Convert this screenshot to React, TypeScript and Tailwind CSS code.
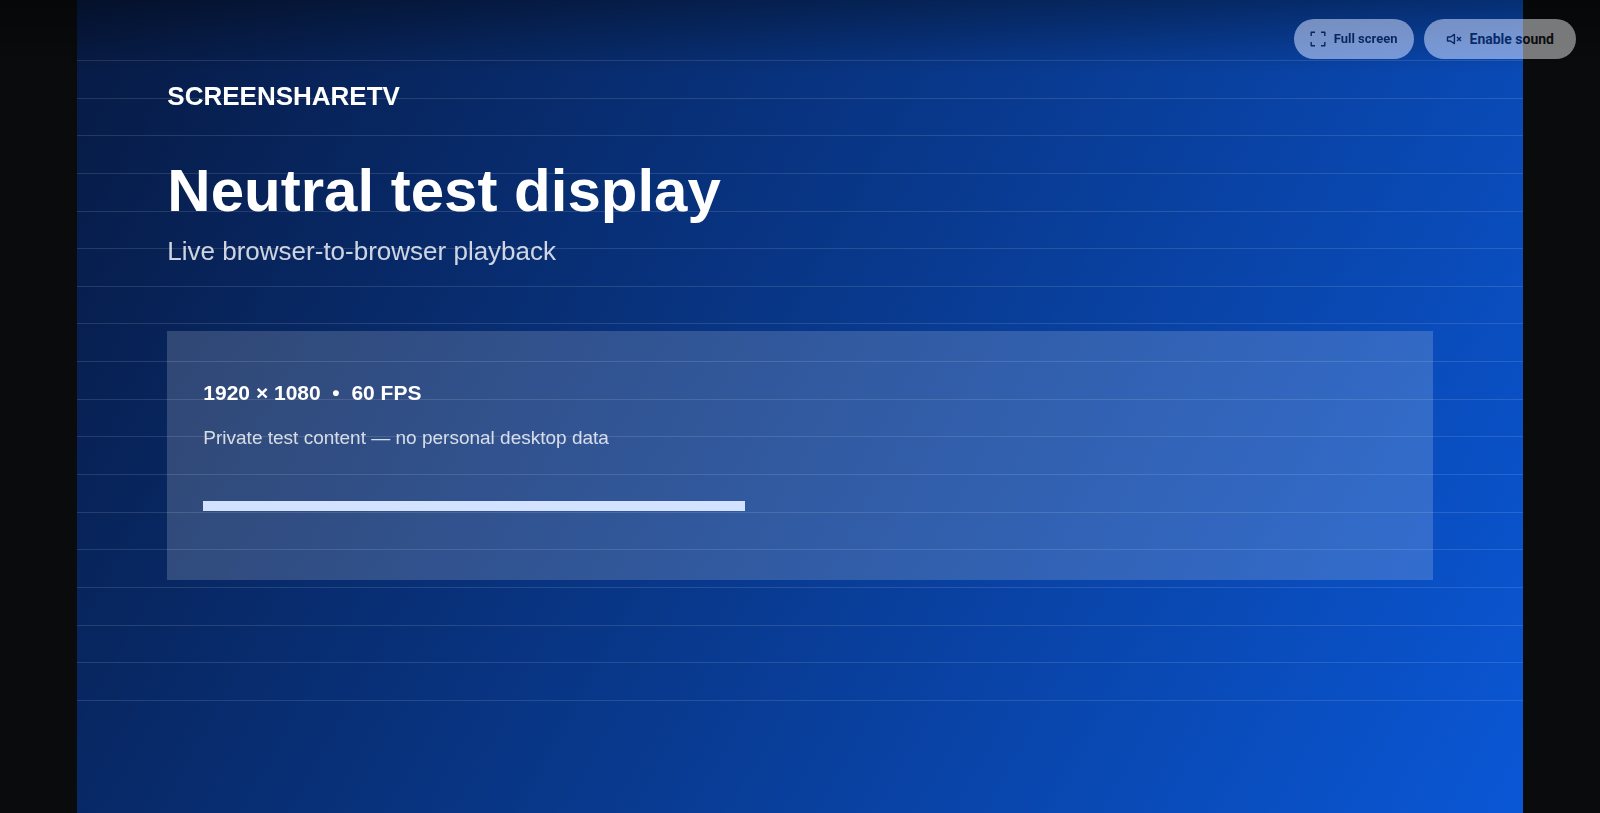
const GRID_ROWS = 17;

function FullScreenIcon() {
  return (
    <svg viewBox="0 0 16 16" className="size-4" fill="none" stroke="currentColor" strokeWidth="1.4" strokeLinejoin="round" aria-hidden="true">
      <path d="M1.200 5V1.200H5M11 1.200h3.800V5M14.800 11v3.800H11M5 14.800H1.200V11" />
    </svg>
  );
}

function MutedIcon() {
  return (
    <svg viewBox="0 0 16 16" className="size-4" fill="none" stroke="currentColor" strokeWidth="1.4" aria-hidden="true">
      <path d="M1.500 6v4h3L8.400 12.600V3.400L4.500 6z" strokeLinejoin="round" />
      <path d="m11 6 4 4M15 6l-4 4" />
    </svg>
  );
}

function GridLines() {
  return (
    <div className="absolute inset-x-0 top-15 flex h-[641px] flex-col border-b border-white/12">
      {Array.from({ length: GRID_ROWS }, (_, i) => (
        <div key={i} className="flex-1 border-t border-white/12" />
      ))}
    </div>
  );
}

function ViewerControls() {
  return (
    <div className="absolute inset-x-0 top-0 flex h-18 items-start justify-end gap-[10px] bg-linear-to-b from-black/36 to-transparent px-6 pt-[19px] font-['Roboto',sans-serif]">
      <button type="button" className="flex h-10 items-center gap-2 rounded-full bg-white px-4 text-[13px] font-bold text-[#111318] opacity-46 backdrop-saturate-150">
        <FullScreenIcon />
        Full screen
      </button>
      <button type="button" className="flex h-10 items-center gap-2 rounded-full bg-white px-[22px] text-sm font-bold text-[#111318] opacity-46 backdrop-saturate-150">
        <MutedIcon />
        Enable sound
      </button>
    </div>
  );
}

export default function App() {
  return (
    <div className="relative flex h-screen justify-center overflow-hidden bg-[#090b0d]">
      {/* Shared display */}
      <main className="relative aspect-video h-full bg-linear-[119deg] from-[#071a43] to-[#0a57d6] font-['Liberation_Sans',Arial,sans-serif] text-white">
        <GridLines />

        <div className="relative px-[90px] pt-20">
          <p className="text-[26px] leading-8 font-bold">SCREENSHARETV</p>
          <h1 className="mt-11 text-[60px] leading-[70px] font-bold">Neutral test display</h1>
          <p className="mt-[10px] text-[26px] leading-[30px] text-white/80">Live browser-to-browser playback</p>

          <section className="mt-[65px] h-[249px] bg-white/17 px-9 pt-12">
            <h2 className="text-[21px] leading-7 font-bold whitespace-pre">1920 × 1080  •  60 FPS</h2>
            <p className="mt-4 text-[19px] leading-[30px] text-white/80">Private test content — no personal desktop data</p>
            <div className="mt-12 h-[10px] w-[542px] bg-[#d3e3ff]" />
          </section>
        </div>
      </main>

      {/* Viewer controls over the stream */}
      <ViewerControls />
    </div>
  );
}
